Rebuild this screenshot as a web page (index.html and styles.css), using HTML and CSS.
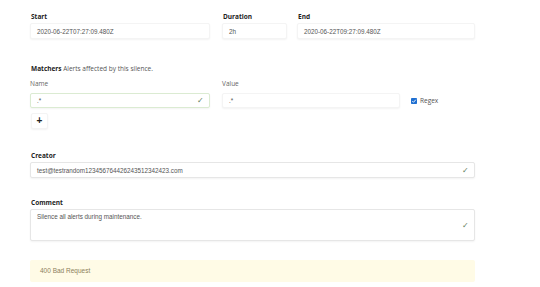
FILE: index.html
```html
<!DOCTYPE html>
<html lang="en">
<head>
    <meta charset="UTF-8">
    <title>New Silence</title>
    <link rel="stylesheet" href="styles.css">
</head>
<body>
    <div class="silence-form">
        <!-- time range -->
        <div class="row">
            <div class="field start">
                <label class="label">Start</label>
                <div class="input">2020-06-22T07:27:09.480Z</div>
            </div>
            <div class="field duration">
                <label class="label">Duration</label>
                <div class="input">2h</div>
            </div>
            <div class="field end">
                <label class="label">End</label>
                <div class="input">2020-06-22T09:27:09.480Z</div>
            </div>
        </div>

        <!-- matchers -->
        <div class="matchers">
            <div class="label"><b>Matchers</b> Alerts affected by this silence.</div>
            <div class="row matcher">
                <div class="field name">
                    <span class="sub-label">Name</span>
                    <div class="input valid">.*<span class="check">&#10003;</span></div>
                </div>
                <div class="field value">
                    <span class="sub-label">Value</span>
                    <div class="input">.*</div>
                </div>
                <div class="regex">
                    <span class="checkbox"><svg viewBox="0 0 6 6" width="6" height="6"><rect width="6" height="6" rx="0.8" fill="#1f6fd1"/><path d="M1.3 3.1 L2.5 4.3 L4.8 1.7" stroke="#fff" stroke-width="0.9" fill="none"/></svg></span>
                    Regex
                </div>
            </div>
            <button class="add-btn">+</button>
        </div>

        <div class="field wide creator">
            <label class="label">Creator</label>
            <div class="input valid-grey">test@testrandom123456764426243512342423.com<span class="check">&#10003;</span></div>
        </div>

        <div class="field wide comment">
            <label class="label">Comment</label>
            <div class="input textarea valid-grey">Silence all alerts during maintenance.<span class="check">&#10003;</span></div>
        </div>

        <div class="alert">400 Bad Request</div>
    </div>
</body>
</html>
```

FILE: styles.css
```css
body {
    margin: 0;
    background-color: #fff;
    font-family: "Liberation Sans", Arial, sans-serif;
    font-size: 7px;
    color: #333;
}
.silence-form {
    width: 445px;
    margin-left: 30px;
    padding-top: 12px;
}
.row {
    display: flex;
    align-items: flex-end;
}
.field {
    display: flex;
    flex-direction: column;
}
.label {
    font-family: "Open Sans", sans-serif;
    font-size: 6.5px;
    font-weight: bold;
    color: #222;
    line-height: 9px;
    margin-bottom: 2px;
    padding-left: 1px;
}
.matchers .label {
    font-weight: normal;
    color: #555;
}
.matchers .label b {
    color: #222;
}
.sub-label {
    font-family: "Open Sans", sans-serif;
    font-size: 6.5px;
    color: #666;
    line-height: 9px;
    margin-bottom: 5px;
}
.input {
    position: relative;
    box-sizing: border-box;
    height: 16px;
    line-height: 15px;
    padding: 0 6px;
    border: 1px solid #f4f4f4;
    border-radius: 2px;
    box-shadow: 0 1px 2px rgba(0, 0, 0, 0.05);
    color: #555;
    font-size: 6.3px;
    background-color: #fff;
    white-space: nowrap;
}
.valid {
    border-color: #dbebd2;
}
.valid-grey {
    border-color: #e6e6e6;
}
.check {
    position: absolute;
    right: 5px;
    top: 0;
    color: #5f7f5f;
    font-size: 7.5px;
}
.start { width: 180px; margin-right: 12px; }
.duration { width: 65px; margin-right: 10px; }
.end { width: 178px; }
.matchers {
    margin-top: 25px;
}
.matcher {
    margin-top: 6px;
}
.name { width: 180px; margin-right: 12px; }
.name .input, .value .input { height: 15px; line-height: 13px; }
.value { width: 178px; }
.regex {
    display: flex;
    align-items: center;
    gap: 3px;
    height: 15px;
    margin-left: 11px;
    font-family: "Open Sans", sans-serif;
    font-size: 6.5px;
    color: #555;
    padding-top: 2px;
}
.checkbox {
    display: flex;
}
.add-btn {
    display: block;
    width: 17px;
    height: 16px;
    margin-top: 5px;
    margin-left: 1px;
    padding: 0;
    border: 1px solid #f4f4f4;
    border-radius: 2px;
    box-shadow: 0 1px 2px rgba(0, 0, 0, 0.05);
    background-color: #fff;
    font-family: "Liberation Sans", sans-serif;
    font-size: 10px;
    font-weight: bold;
    line-height: 12px;
    color: #222;
}
.wide {
    width: 445px;
}
.creator {
    margin-top: 22px;
}
.comment {
    margin-top: 20px;
}
.textarea {
    height: 32px;
    line-height: 11px;
    padding-top: 1px;
    white-space: normal;
}
.textarea .check {
    top: 10px;
}
.alert {
    margin-top: 19px;
    height: 22px;
    line-height: 22px;
    padding-left: 10px;
    background-color: #fffbe6;
    color: #8c7f5c;
    font-size: 6.5px;
    border-radius: 2px;
}
```
